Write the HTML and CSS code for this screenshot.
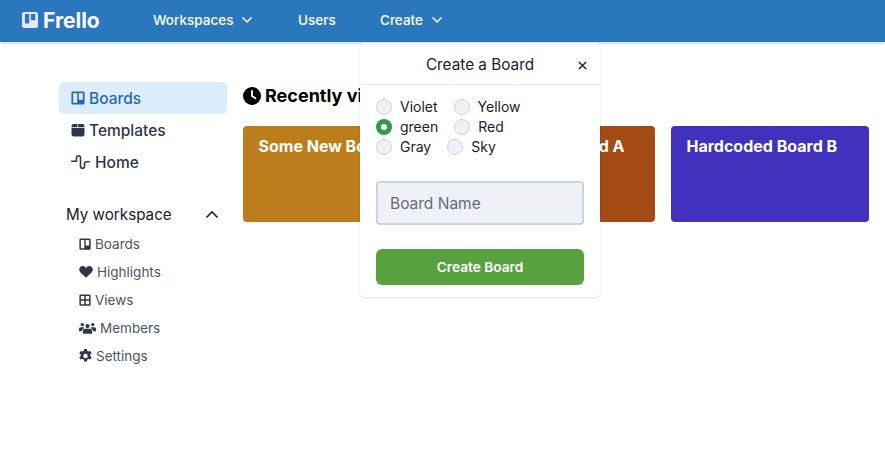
FILE: index.html
```html
<!DOCTYPE html>
<html lang="en">
<head>
  <meta charset="UTF-8">
  <title>Frello</title>
  <link rel="stylesheet" href="styles.css">
</head>
<body>
  <nav class="navbar">
    <a class="brand">
      <svg class="brand-icon" viewBox="0 0 16 16"><path fill="#e4e9ef" fill-rule="evenodd" d="M2 0h12a2 2 0 0 1 2 2v12a2 2 0 0 1-2 2H2a2 2 0 0 1-2-2V2a2 2 0 0 1 2-2zm1.500 2a.6.6 0 0 0-.6.6v8.400a.6.6 0 0 0 .6.6h3.200a.6.6 0 0 0 .6-.6V2.600a.6.6 0 0 0-.6-.6zm6 0a.6.6 0 0 0-.6.6v5a.6.6 0 0 0 .6.6h3.200a.6.6 0 0 0 .6-.6v-5a.6.6 0 0 0-.6-.6z"/></svg>
      Frello
    </a>
    <a class="nav-link nav-workspaces">Workspaces <svg class="chev" viewBox="0 0 12 8"><path d="M1.500 1.500 6 6l4.500-4.500"/></svg></a>
    <a class="nav-link nav-users">Users</a>
    <a class="nav-link nav-create">Create <svg class="chev" viewBox="0 0 12 8"><path d="M1.500 1.500 6 6l4.500-4.500"/></svg></a>
  </nav>

  <div class="page">
    <aside class="sidebar">
      <a class="side-item active">
        <svg class="side-icon" viewBox="0 0 16 16"><path fill="currentColor" fill-rule="evenodd" d="M2 .5h12A1.500 1.500 0 0 1 15.500 2v12a1.500 1.500 0 0 1-1.500 1.500H2A1.500 1.500 0 0 1 .5 14V2A1.500 1.500 0 0 1 2 .5zm.5 2v11h4.600v-11zm6.400 0v7.500h4.600V2.500z"/></svg>
        Boards
      </a>
      <a class="side-item">
        <svg class="side-icon" viewBox="0 0 16 16"><path fill="currentColor" d="M3 1h4.400v3.800H.6V3.400A2.400 2.400 0 0 1 3 1zm5.200 0H13a2.400 2.400 0 0 1 2.400 2.400v1.400H8.200zM.6 5.800h14.800v7.200a2.400 2.400 0 0 1-2.400 2.400H3A2.400 2.400 0 0 1 .6 13z"/></svg>
        Templates
      </a>
      <a class="side-item item-home">
        <svg class="side-icon icon-pulse" viewBox="0 0 19 14"><path fill="none" stroke="currentColor" stroke-width="1.600" stroke-linecap="round" stroke-linejoin="round" d="M.8 6.300h4.700V2.800a2 2 0 0 1 4 0v8.400a2 2 0 0 0 4 0V8.500a1.700 1.700 0 0 1 1.700-1.700h3"/></svg>
        Home
      </a>

      <div class="workspace-head">
        <span>My workspace</span>
        <svg class="chev-up" viewBox="0 0 14 9"><path d="M1.500 7.500 7 2l5.500 5.500"/></svg>
      </div>
      <a class="sub-item">
        <svg class="sub-icon" viewBox="0 0 16 16"><path fill="currentColor" fill-rule="evenodd" d="M2 .5h12A1.500 1.500 0 0 1 15.500 2v12a1.500 1.500 0 0 1-1.500 1.500H2A1.500 1.500 0 0 1 .5 14V2A1.500 1.500 0 0 1 2 .5zm.5 2v11h4.600v-11zm6.400 0v7.500h4.600V2.500z"/></svg>
        Boards
      </a>
      <a class="sub-item">
        <svg class="sub-icon icon-heart" viewBox="0 0 16 14"><path fill="currentColor" d="M8 13.800 1.500 7.500C-.4 5.600-.4 2.700 1.300 1.100 3 -.4 5.800-.2 7.300 1.400l.7.800.7-.8c1.500-1.600 4.300-1.800 6-.3 1.700 1.600 1.700 4.500-.2 6.400z"/></svg>
        Highlights
      </a>
      <a class="sub-item">
        <svg class="sub-icon" viewBox="0 0 16 16"><path fill="currentColor" fill-rule="evenodd" d="M2 .5h12A1.500 1.500 0 0 1 15.500 2v12a1.500 1.500 0 0 1-1.500 1.500H2A1.500 1.500 0 0 1 .5 14V2A1.500 1.500 0 0 1 2 .5zm.5 2V7h4.500V2.500zm6.500 0V7h4.500V2.500zM2.500 9v4.500h4.500V9zm6.500 0v4.500h4.500V9z"/></svg>
        Views
      </a>
      <a class="sub-item">
        <svg class="sub-icon icon-users" viewBox="0 0 20 14"><path fill="currentColor" d="M10 2.200a2.500 2.500 0 1 1 0 5 2.500 2.500 0 0 1 0-5zM3.800 1a2 2 0 1 1 0 4 2 2 0 0 1 0-4zm12.400 0a2 2 0 1 1 0 4 2 2 0 0 1 0-4zM7.500 8h5a3 3 0 0 1 3 3v2.800h-11V11a3 3 0 0 1 3-3zM2 6h3.600a2 2 0 0 1 .7 1.200C4.500 7.800 3.400 9.200 3.200 10.800H0V8a2 2 0 0 1 2-2zm12.400 0H18a2 2 0 0 1 2 2v2.800h-3.200c-.2-1.600-1.300-3-3.100-3.600a2 2 0 0 1 .7-1.200z"/></svg>
        Members
      </a>
      <a class="sub-item">
        <svg class="sub-icon icon-gear" viewBox="1.500 .5 13 14.500"><path fill="currentColor" fill-rule="evenodd" d="M6.600.5h2.800l.4 2 1.300.7 1.900-.7 1.400 2.400-1.500 1.300v1.600l1.500 1.300-1.400 2.400-1.900-.7-1.300.7-.4 2H6.600l-.4-2-1.300-.7-1.900.7L1.600 9.100l1.500-1.300V6.200L1.600 4.900 3 2.500l1.900.7 1.300-.7zM8 5.400a2.300 2.300 0 1 0 0 4.600 2.300 2.300 0 0 0 0-4.600z"/></svg>
        Settings
      </a>
    </aside>

    <main class="content">
      <h2 class="section-title">
        <svg class="clock" viewBox="0 0 18 18"><circle cx="9" cy="9" r="9" fill="#000"/><path d="M9 3.800V9l3.400 2.300" fill="none" stroke="#fff" stroke-width="1.800" stroke-linecap="round"/></svg>
        Recently viewed
      </h2>
      <div class="board-row">
        <div class="board board-yellow">Some New Board</div>
        <div class="board board-orange">Hardcoded Board A</div>
        <div class="board board-indigo">Hardcoded Board B</div>
      </div>
    </main>
  </div>

  <div class="popover">
    <div class="popover-head">
      Create a Board
      <svg class="close" viewBox="0 0 10 10"><path d="M1 1l8 8M9 1 1 9"/></svg>
    </div>
    <div class="popover-body">
      <div class="radio-row">
        <label class="radio"><span class="dot"></span>Violet</label>
        <label class="radio"><span class="dot"></span>Yellow</label>
      </div>
      <div class="radio-row">
        <label class="radio"><span class="dot checked"></span>green</label>
        <label class="radio"><span class="dot"></span>Red</label>
      </div>
      <div class="radio-row">
        <label class="radio"><span class="dot"></span>Gray</label>
        <label class="radio"><span class="dot"></span>Sky</label>
      </div>
      <input class="board-name" type="text" placeholder="Board Name">
      <button class="create-btn">Create Board</button>
    </div>
  </div>
</body>
</html>
```

FILE: styles.css
```css
* {
  box-sizing: border-box;
}
body {
  margin: 0;
  font-family: Inter, "Liberation Sans", sans-serif;
  background: white;
  color: #2d3748;
}
.navbar {
  height: 42px;
  padding: 0 0 2px 22px;
  background-color: #2b77bd;
  box-shadow: 0 1px 4px rgba(0,0,0,0.2);
  display: flex;
  align-items: center;
  color: white;
}
.brand {
  display: flex;
  align-items: center;
  gap: 5px;
  font-size: 21px;
  font-weight: 700;
  width: 131px;
}
.brand-icon {
  width: 16px;
  height: 16px;
}
.nav-link {
  font-size: 13.5px;
  font-weight: 500;
  display: flex;
  align-items: center;
  gap: 5px;
}
.nav-workspaces {
  width: 145px;
}
.nav-users {
  width: 82px;
}
.chev {
  width: 12px;
  height: 8px;
  margin-left: 3px;
  fill: none;
  stroke: white;
  stroke-width: 1.5;
}
.page {
  display: flex;
  padding: 40px 16px 0 59px;
}
.sidebar {
  width: 168px;
  flex-shrink: 0;
  margin-right: 16px;
}
.side-item {
  height: 32px;
  display: flex;
  align-items: center;
  gap: 4px;
  padding-left: 12px;
  font-size: 15.5px;
  font-weight: 500;
  border-radius: 5px;
  color: #2d3748;
}
.active {
  background-color: #dcedfc;
  color: #2a69ac;
}
.side-icon {
  width: 14px;
  height: 14px;
}
.icon-pulse {
  width: 19px;
  height: 14px;
  margin-right: 1px;
}
.workspace-head {
  height: 32px;
  margin-top: 20px;
  padding-left: 7px;
  padding-right: 8px;
  display: flex;
  align-items: center;
  justify-content: space-between;
  font-size: 15.2px;
  color: #1a202c;
}
.chev-up {
  width: 14px;
  height: 9px;
  fill: none;
  stroke: #1a202c;
  stroke-width: 1.6;
}
.sub-item {
  height: 28px;
  display: flex;
  align-items: center;
  gap: 4px;
  padding-left: 20px;
  font-size: 13.5px;
  color: #4a5568;
}
.sub-icon {
  width: 12px;
  height: 12px;
  color: #2d3748;
  flex-shrink: 0;
}
.icon-heart {
  width: 14px;
  height: 12px;
}
.icon-users {
  width: 17px;
  height: 12px;
}
.icon-gear {
  width: 13px;
  height: 14px;
}
.content {
  flex: 1;
}
.section-title {
  margin: 0;
  height: 26px;
  display: flex;
  align-items: center;
  gap: 4px;
  font-size: 18px;
  font-weight: 700;
  color: black;
}
.clock {
  width: 18px;
  height: 18px;
  margin-top: 1px;
}
.board-row {
  display: grid;
  grid-template-columns: repeat(3, 198px);
  gap: 16px;
  margin-top: 18px;
}
.board {
  height: 96px;
  padding: 10px 16px 10px 15.5px;
  border-radius: 4px;
  color: white;
  font-size: 16px;
  font-weight: 700;
  white-space: nowrap;
}
.board-yellow {
  background-color: #bc7d1c;
}
.board-orange {
  background-color: #a34a15;
}
.board-indigo {
  background-color: #4231bc;
}
.popover {
  position: absolute;
  left: 360px;
  top: 43px;
  width: 240px;
  height: 254px;
  background: white;
  border-radius: 5px;
  box-shadow: 0 1px 3px rgba(0,0,0,0.13);
  color: #1a202c;
}
.popover-head {
  position: relative;
  height: 42px;
  padding-top: 2px;
  border-bottom: 1px solid #edf0f3;
  display: flex;
  align-items: center;
  justify-content: center;
  font-size: 15.3px;
}
.close {
  position: absolute;
  right: 13px;
  top: 18px;
  width: 9px;
  height: 9px;
  fill: none;
  stroke: #1a202c;
  stroke-width: 1.5;
}
.popover-body {
  padding: 12px 16px 0;
}
.radio-row {
  display: flex;
  gap: 16px;
  height: 20px;
}
.radio {
  display: flex;
  align-items: center;
  gap: 8px;
  height: 18px;
  font-size: 14px;
  color: #1a202c;
}
.dot {
  width: 16px;
  height: 16px;
  margin-top: 2px;
  border-radius: 50%;
  border: 1px solid #cbd5e0;
  background: #eff1f6;
}
.dot.checked {
  background: white;
  border: 5px solid #2f9b4b;
}
.board-name {
  display: block;
  width: 100%;
  height: 44px;
  margin-top: 24px;
  padding: 0 12px;
  border: 2px solid #cbd5e0;
  border-radius: 4px;
  background: #eff1f6;
  font-family: inherit;
  font-size: 15.5px;
}
.board-name::placeholder {
  color: #626b7c;
  opacity: 1;
}
.create-btn {
  display: block;
  width: 100%;
  height: 36px;
  margin-top: 24px;
  border: none;
  border-radius: 6px;
  background-color: #58a13f;
  color: white;
  font-family: inherit;
  font-size: 13.7px;
  font-weight: 600;
}
```
